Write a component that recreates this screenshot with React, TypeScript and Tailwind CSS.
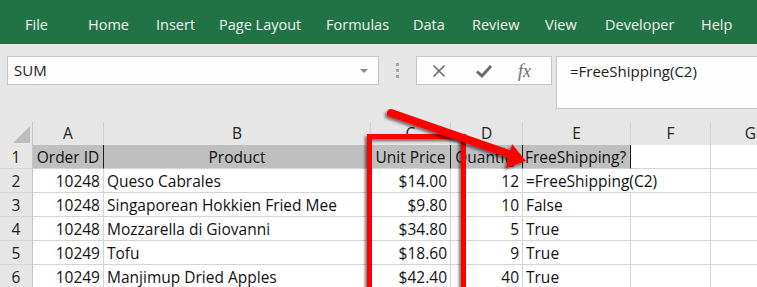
import { X } from 'lucide-react';

const tabs = [
  { label: 'File', w: 'w-[63px]' },
  { label: 'Home', w: 'w-[68px]' },
  { label: 'Insert', w: 'w-[63px]' },
  { label: 'Page Layout', w: 'w-[107px]' },
  { label: 'Formulas', w: 'w-[87px]' },
  { label: 'Data', w: 'w-[59px]' },
  { label: 'Review', w: 'w-[73px]' },
  { label: 'View', w: 'w-[60px]' },
  { label: 'Developer', w: 'w-[96px]' },
  { label: 'Help', w: 'w-[60px]' },
];

const cols = [
  { key: 'A', w: 'w-[71px]' },
  { key: 'B', w: 'w-[267px]' },
  { key: 'C', w: 'w-[80px]' },
  { key: 'D', w: 'w-[72px]' },
  { key: 'E', w: 'w-[108px]' },
  { key: 'F', w: 'w-[80px]' },
  { key: 'G', w: 'w-[80px]' },
];

const rows = [
  ['10248', 'Queso Cabrales', '$14.00', '12', '=FreeShipping(C2)'],
  ['10248', 'Singaporean Hokkien Fried Mee', '$9.80', '10', 'False'],
  ['10248', 'Mozzarella di Giovanni', '$34.80', '5', 'True'],
  ['10249', 'Tofu', '$18.60', '9', 'True'],
  ['10249', 'Manjimup Dried Apples', '$42.40', '40', 'True'],
];

const header = ['Order ID', 'Product', 'Unit Price', 'Quantity', 'FreeShipping?'];

function RowHead({ n }: { n: number }) {
  return (
    <div className="w-[33px] h-[24px] shrink-0 flex items-center justify-center pt-[2px] bg-[#e6e6e6] border-r border-b border-r-[#c6c6c6] border-b-[#d4d4d4] text-[#222]">
      {n}
    </div>
  );
}

export default function App() {
  return (
    <div
      className="relative w-[757px] h-[287px] overflow-hidden bg-white"
      style={{ fontFamily: '"Open Sans", "Noto Sans", sans-serif' }}
    >
      {/* Ribbon tabs */}
      <div className="h-[44px] bg-[#217346] flex items-center pl-[25px] pt-[6px] text-[14.5px] text-[#f1f1f1]">
        {tabs.map((t) => (
          <div key={t.label} className={`${t.w} shrink-0 whitespace-nowrap`}>
            {t.label}
          </div>
        ))}
      </div>

      {/* Formula bar */}
      <div className="h-[78px] bg-[#e6e6e6] flex items-start pt-[12px] pl-[7px]">
        <div className="w-[372px] h-[29px] shrink-0 bg-[#fdfdfd] border border-[#c6c6c6] flex items-center justify-between pl-[6px] pr-[10px] text-[15px] text-[#222]">
          <span>SUM</span>
          <span className="w-0 h-0 border-l-[4px] border-r-[4px] border-t-[4px] border-l-transparent border-r-transparent border-t-[#8a8a8a]" />
        </div>
        <div className="w-[37px] h-[29px] shrink-0 flex flex-col items-center justify-center gap-[3px]">
          <span className="w-[3px] h-[3px] bg-[#a6a6a6]" />
          <span className="w-[3px] h-[3px] bg-[#a6a6a6]" />
          <span className="w-[3px] h-[3px] bg-[#a6a6a6]" />
        </div>
        <div className="w-[136px] h-[29px] shrink-0 bg-[#fdfdfd] border border-[#c6c6c6] flex items-center pl-[12px] text-[#6b6b6b]">
          <X className="w-[20px] h-[20px]" strokeWidth={2} />
          <svg className="ml-[25px]" width="20" height="20" viewBox="0 0 20 20">
            <path d="M3 10.5 L8 15 L17 5" fill="none" stroke="#6b6b6b" strokeWidth="3" />
          </svg>
          <span
            className="ml-[24px] text-[18px] italic leading-none"
            style={{ fontFamily: '"Liberation Serif", serif' }}
          >
            fx
          </span>
        </div>
        <div className="ml-[4px] w-[260px] shrink-0 h-[53px] bg-[#fdfdfd] border border-[#c6c6c6] pl-[13px] pt-[3px] text-[15px] text-[#222]">
          =FreeShipping(C2)
        </div>
      </div>

      {/* Grid */}
      <div className="text-[15.5px] text-[#111]">
        <div className="flex h-[23px] bg-[#e6e6e6] text-[#222]">
          <div className="w-[33px] shrink-0 relative border-r border-[#c6c6c6]">
            <div className="absolute right-[2px] bottom-[2px] w-0 h-0 border-l-[17px] border-t-[17px] border-l-transparent border-t-transparent border-b-0 border-r-[17px] border-r-[#bdbdbd]" />
          </div>
          {cols.map((c) => (
            <div key={c.key} className={`${c.w} shrink-0 border-r border-[#d0d0d0] flex items-center justify-center`}>
              {c.key}
            </div>
          ))}
        </div>

        {/* Row 1 headers */}
        <div className="flex h-[24px]">
          <RowHead n={1} />
          {cols.map((c, i) => (
            <div
              key={c.key}
              className={`${c.w} h-[24px] shrink-0 border-b border-b-[#d4d4d4] border-r overflow-hidden whitespace-nowrap flex items-center pt-[2px] ${
                i < 5 ? 'bg-[#bfbfbf] border-r-[#1e1e1e]' : 'border-r-[#d4d4d4]'
              } ${i === 4 ? 'justify-start pl-[2px]' : 'justify-center'}`}
            >
              {i < 5 ? header[i] : ''}
            </div>
          ))}
        </div>

        {rows.map((r, ri) => (
          <div key={ri} className="flex h-[24px]">
            <RowHead n={ri + 2} />
            {cols.map((c, i) => {
              const v = r[i] ?? '';
              const right = i === 0 || i === 2 || i === 3;
              const overflow = ri === 0 && i === 4;
              return (
                <div
                  key={c.key}
                  className={`${c.w} h-[24px] shrink-0 border-b border-[#d4d4d4] whitespace-nowrap flex items-center pt-[2px] ${
                    overflow ? 'overflow-visible relative z-10' : 'border-r overflow-hidden'
                  } ${right ? 'justify-end pr-[3px]' : 'justify-start pl-[3px]'}`}
                >
                  {v}
                </div>
              );
            })}
          </div>
        ))}
      </div>

      {/* Annotations */}
      <svg className="absolute left-0 top-0 pointer-events-none" width="757" height="287">
        <defs>
          <filter id="sh" x="-20%" y="-20%" width="140%" height="140%">
            <feDropShadow dx="-2" dy="2" stdDeviation="1.5" floodColor="#000" floodOpacity="0.55" />
          </filter>
        </defs>
        <rect x="369.5" y="136.5" width="94" height="200" fill="none" stroke="#f00" strokeWidth="5" filter="url(#sh)" />
        <g filter="url(#sh)">
          <line x1="391" y1="113" x2="512" y2="155" stroke="#f00" strokeWidth="8" strokeLinecap="round" />
          <polygon points="512,144 526,161 506,168" fill="#f00" />
        </g>
      </svg>
    </div>
  );
}
